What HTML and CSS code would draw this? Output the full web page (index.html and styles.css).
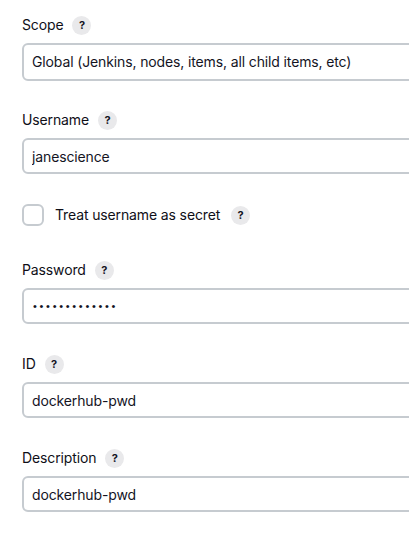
FILE: index.html
```html
<!DOCTYPE html>
<html lang="en">
<head>
<meta charset="utf-8">
<title>Credentials</title>
<link rel="stylesheet" href="styles.css">
</head>
<body>
<form class="form">
  <div class="field field-first">
    <div class="label-row"><span class="label">Scope</span><span class="help">?</span></div>
    <div class="control select">Global (Jenkins, nodes, items, all child items, etc)</div>
  </div>
  <div class="field field-user">
    <div class="label-row"><span class="label">Username</span><span class="help">?</span></div>
    <input class="control" type="text" value="janescience">
  </div>
  <div class="check-row">
    <span class="checkbox"></span>
    <span class="check-label">Treat username as secret</span>
    <span class="help">?</span>
  </div>
  <div class="field">
    <div class="label-row"><span class="label">Password</span><span class="help">?</span></div>
    <input class="control password" type="password" value="abcdefghijklm">
  </div>
  <div class="field">
    <div class="label-row"><span class="label">ID</span><span class="help">?</span></div>
    <input class="control" type="text" value="dockerhub-pwd">
  </div>
  <div class="field">
    <div class="label-row"><span class="label">Description</span><span class="help">?</span></div>
    <input class="control" type="text" value="dockerhub-pwd">
  </div>
</form>
</body>
</html>
```

FILE: styles.css
```css
html, body {
  margin: 0;
  padding: 0;
  background: #ffffff;
  overflow: hidden;
}
body {
  font-family: Inter, "Liberation Sans", sans-serif;
  font-size: 14px;
  line-height: 20px;
  letter-spacing: -0.13px;
  color: #14141f;
}
.form {
  padding: 15px 0 0 22px;
}
.field {
  margin-bottom: 30px;
}
.field-first {
  margin-bottom: 29px;
}
.label-row {
  display: flex;
  align-items: center;
  gap: 9px;
  height: 20px;
  margin-bottom: 8px;
}
.label {
  font-weight: 400;
  color: #0f0f18;
}
.help {
  display: inline-flex;
  align-items: center;
  justify-content: center;
  width: 19px;
  height: 19px;
  border-radius: 50%;
  background: #e9e9eb;
  color: #14141f;
  font-size: 11px;
  font-weight: 700;
  letter-spacing: 0;
  line-height: 1;
}
.control {
  box-sizing: border-box;
  display: block;
  width: 440px;
  height: 36px;
  margin: 0;
  padding: 0 8px;
  border: 2px solid #c6cbd0;
  border-radius: 6px;
  background: #ffffff;
  font-family: inherit;
  font-size: 14px;
  letter-spacing: -0.13px;
  color: #14141f;
  outline: none;
}
.password {
  font-family: "Liberation Sans", sans-serif;
  font-size: 11px;
  letter-spacing: 2.7px;
  padding-left: 9px;
}
.select {
  height: 38px;
  display: flex;
  align-items: center;
}
.check-row {
  display: flex;
  align-items: center;
  height: 22px;
  margin-top: 30px;
  margin-bottom: 34px;
}
.field-user {
  margin-bottom: 0;
}
.checkbox {
  box-sizing: border-box;
  width: 22px;
  height: 22px;
  border: 2px solid #c6cbd0;
  border-radius: 6px;
  margin-right: 11px;
}
.check-label {
  font-weight: 400;
  color: #0f0f18;
  margin-right: 11px;
}
```
